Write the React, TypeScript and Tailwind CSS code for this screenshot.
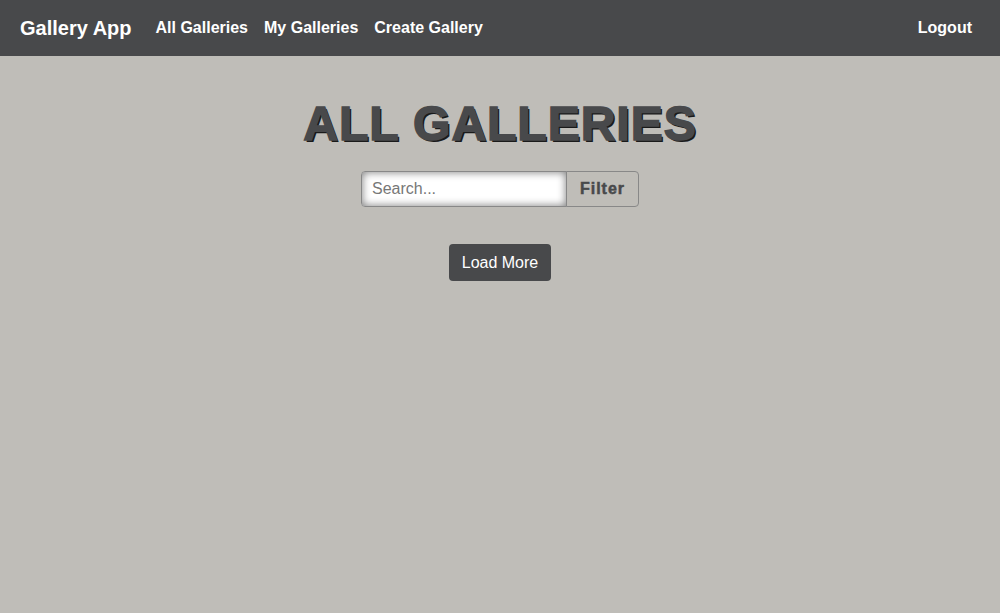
export default function App() {
  return (
    <div className="min-h-[613px] bg-[#bfbdb8] font-['Liberation_Sans',Arial,sans-serif]">
      <nav className="flex h-14 items-center justify-between bg-[#48494b] pl-5 pr-7 text-white">
        <div className="flex items-center">
          <a className="mr-6 text-xl font-bold">Gallery App</a>
          <a className="mr-4 font-bold">All Galleries</a>
          <a className="mr-4 font-bold">My Galleries</a>
          <a className="font-bold">Create Gallery</a>
        </div>
        <a className="font-bold">Logout</a>
      </nav>

      <main className="flex flex-col items-center">
        <h1 className="mt-[44px] text-5xl leading-none font-bold tracking-[1px] text-[#48494b] [-webkit-text-stroke:1.5px_#48494b] [text-shadow:2px_2px_0_#1a1a1a]">
          ALL GALLERIES
        </h1>

        <div className="mt-[23px] flex">
          <input
            type="text"
            placeholder="Search..."
            className="h-9 w-[206px] rounded-l border border-[#888] bg-white px-2.5 text-base text-[#333] shadow-[inset_0_0_8px_#777] outline-none placeholder:text-[#777]"
          />
          <button className="-ml-px h-9 w-[73px] rounded-r border border-[#888] bg-[#bfbdb8] text-base font-bold tracking-[1px] text-[#48494b] [-webkit-text-stroke:0.5px_#48494b]">
            Filter
          </button>
        </div>

        <button className="mt-[37px] h-[37px] rounded bg-[#48494b] px-[13px] text-base text-white">
          Load More
        </button>
      </main>
    </div>
  );
}
